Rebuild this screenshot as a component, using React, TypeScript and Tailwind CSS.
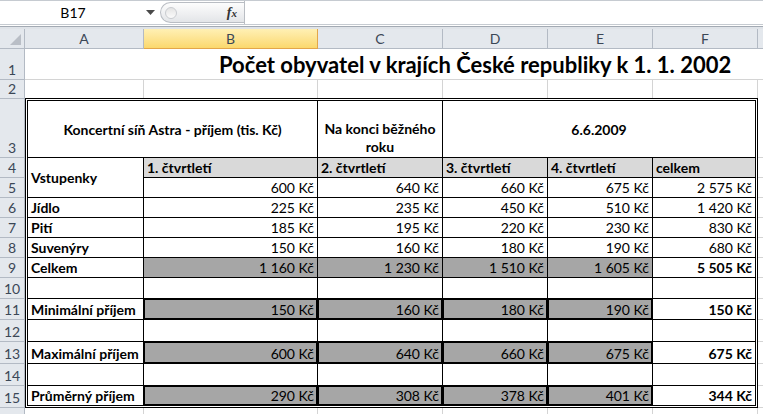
import React from 'react';

const nb = (s: string) => s.replace(/ /g, '\u00a0');

// sheet geometry (px)
const colWidths = [119, 174, 125, 105, 105, 105];
const colNames = ['A', 'B', 'C', 'D', 'E', 'F'];
const rowHeads = [
  { n: '1', h: 'h-[31px]' },
  { n: '2', h: 'h-[19px]' },
  { n: '3', h: 'h-[59px]' },
  { n: '4', h: 'h-[20px]' },
  { n: '5', h: 'h-[20px]' },
  { n: '6', h: 'h-[20px]' },
  { n: '7', h: 'h-[20px]' },
  { n: '8', h: 'h-[20px]' },
  { n: '9', h: 'h-[20px]' },
  { n: '10', h: 'h-[21px]' },
  { n: '11', h: 'h-[21px]' },
  { n: '12', h: 'h-[22px]' },
  { n: '13', h: 'h-[22px]' },
  { n: '14', h: 'h-[22px]' },
  { n: '15', h: 'h-[22px]' },
];
const gStrip = ['h-[60px]', 'h-[20px]', 'h-[20px]', 'h-[20px]', 'h-[20px]', 'h-[20px]', 'h-[20px]', 'h-[21px]', 'h-[21px]', 'h-[22px]', 'h-[22px]', 'h-[22px]', 'h-[22px]'];

type Kind = 'plain' | 'sum' | 'box' | 'blank';
const rows: { label: string; vals: string[]; total: string; kind: Kind }[] = [
  { label: 'Jídlo', vals: ['225', '235', '450', '510'], total: '1 420', kind: 'plain' },
  { label: 'Pití', vals: ['185', '195', '220', '230'], total: '830', kind: 'plain' },
  { label: 'Suvenýry', vals: ['150', '160', '180', '190'], total: '680', kind: 'plain' },
  { label: 'Celkem', vals: ['1 160', '1 230', '1 510', '1 605'], total: '5 505', kind: 'sum' },
  { label: '', vals: ['', '', '', ''], total: '', kind: 'blank' },
  { label: 'Minimální příjem', vals: ['150', '160', '180', '190'], total: '150', kind: 'box' },
  { label: '', vals: ['', '', '', ''], total: '', kind: 'blank' },
  { label: 'Maximální příjem', vals: ['600', '640', '660', '675'], total: '675', kind: 'box' },
  { label: '', vals: ['', '', '', ''], total: '', kind: 'blank' },
  { label: 'Průměrný příjem', vals: ['290', '308', '378', '401'], total: '344', kind: 'box' },
];

const cell = (extra: string, lastCol = false, lastRow = false) =>
  `flex overflow-hidden whitespace-nowrap px-[3px] border-black ${lastCol ? '' : 'border-r'} ${lastRow ? '' : 'border-b'} ${extra}`;

const kc = (v: string) => (v ? nb(`${v} Kč`) : '');

const FormulaBar = () => (
  <div>
    <div className="flex h-[25px] border-y border-[#c6cbd1] bg-white">
      <div className="flex w-[160px] items-center">
        <span className="flex-1 text-center text-[14px] text-black">B17</span>
        <svg width="9" height="5" viewBox="0 0 9 5" className="mr-[5px]">
          <path d="M0 0h9L4.5 5z" fill="#4a4a4a" />
        </svg>
      </div>
      <div className="my-[1px] flex w-[84px] items-center justify-between rounded-l-full border border-r-0 border-[#b9bdc3] bg-gradient-to-b from-[#fdfdfd] to-[#e3e5e8] pl-[4px] pr-[7px]">
        <span className="h-[12px] w-[12px] rounded-full border border-[#c9ccd0] bg-gradient-to-b from-[#e4e4e4] to-[#fbfbfb]" />
        <span className="text-[14px] font-bold italic text-[#333] [font-family:'Liberation_Serif',serif]">
          f<span className="text-[11px]">x</span>
        </span>
      </div>
      <div className="flex-1 border-l border-[#b9bdc3]" />
    </div>
    <div className="h-[1px] bg-white" />
    <div className="h-[3px] border-t border-[#a3aab3] bg-[#dfe3e8]" />
  </div>
);

const ColumnHeaders = () => (
  <div className="flex h-[20px] text-[14px] text-[#3b4756]">
    <div className="flex w-[25px] items-end justify-end border-b border-r border-[#b3bac4] bg-[#e4e8ed] p-[3px]">
      <svg width="11" height="11" viewBox="0 0 11 11">
        <path d="M11 0V11H0z" fill="#b9bec6" />
      </svg>
    </div>
    {colNames.map((c, i) => (
      <div
        key={c}
        style={{ width: colWidths[i] }}
        className={
          c === 'B'
            ? 'flex items-center justify-center border-b border-r border-[#e3a64a] bg-gradient-to-b from-[#fff0b4] to-[#fbd86c]'
            : 'flex items-center justify-center border-b border-r border-[#b3bac4] bg-[#e4e8ed]'
        }
      >
        {c}
      </div>
    ))}
    <div className="flex-1 border-b border-[#b3bac4] bg-[#e4e8ed]" />
  </div>
);

const RowHeaders = () => (
  <div className="flex w-[25px] flex-col text-[14px] text-[#3b4756]">
    {rowHeads.map((r) => (
      <div key={r.n} className={`flex ${r.h} items-end justify-center border-b border-r border-[#b3bac4] bg-[#e4e8ed] pb-[1px] leading-[17px]`}>
        {r.n}
      </div>
    ))}
    <div className="flex-1 border-r border-[#b3bac4] bg-[#e4e8ed]" />
  </div>
);

const GridRow = ({ h }: { h: string }) => (
  <div className={`flex ${h}`}>
    {colWidths.map((w, i) => (
      <div key={i} style={{ width: w }} className="border-r border-[#d4d4d4]" />
    ))}
    <div className="flex-1" />
  </div>
);

const Table = () => (
  <div className="grid w-[733px] grid-cols-[116px_174px_125px_105px_105px_102px] grid-rows-[57px_repeat(6,20px)_21px_21px_22px_22px_22px_19px] border-[3px] border-double border-black font-normal leading-[17px]">
    {/* row 3 */}
    <div className={cell('col-span-2 items-center justify-center font-bold')}>
      {nb('Koncertní síň Astra - příjem (tis. Kč)')}
    </div>
    <div className={cell('items-end justify-center pb-[1px] text-center font-bold leading-[18px] whitespace-normal')}>
      <span>
        {nb('Na konci běžného')}
        <br />
        roku
      </span>
    </div>
    <div className={cell('col-span-3 items-center justify-center font-bold', true)}>6.6.2009</div>

    {/* rows 4-5 */}
    <div className={cell('row-span-2 items-center font-bold')}>Vstupenky</div>
    {['1. čtvrtletí', '2. čtvrtletí', '3. čtvrtletí', '4. čtvrtletí', 'celkem'].map((t, i) => (
      <div key={t} className={cell('items-end bg-[#d9d9d9] pb-[1px] font-bold', i === 4)}>
        {nb(t)}
      </div>
    ))}
    {['600', '640', '660', '675', '2 575'].map((v, i) => (
      <div key={i} className={cell('items-end justify-end pb-[1px]', i === 4)}>
        {kc(v)}
      </div>
    ))}

    {/* rows 6-15 */}
    {rows.map((r, ri) => {
      const last = ri === rows.length - 1;
      const fill =
        r.kind === 'sum'
          ? 'bg-[#a6a6a6]'
          : r.kind === 'box'
            ? 'bg-[#a6a6a6] shadow-[inset_0_0_0_1px_#000]'
            : '';
      return (
        <React.Fragment key={ri}>
          <div className={cell('items-end pb-[1px] font-bold', false, last)}>{nb(r.label)}</div>
          {r.vals.map((v, i) => (
            <div key={i} className={cell(`items-end justify-end pb-[1px] ${fill}`, false, last)}>
              {kc(v)}
            </div>
          ))}
          <div className={cell(`items-end justify-end pb-[1px] ${r.kind === 'plain' ? '' : 'font-bold'}`, true, last)}>
            {kc(r.total)}
          </div>
        </React.Fragment>
      );
    })}
  </div>
);

const Sheet = () => (
  <div className="flex flex-1 flex-col overflow-hidden">
    <div className="flex h-[31px] items-end border-b border-[#d4d4d4] pl-[194px]">
      <span className="whitespace-nowrap text-[22px] font-bold leading-[28px]">
        {nb('Počet obyvatel v krajích České republiky k 1. 1. 2002')}
      </span>
    </div>
    <GridRow h="h-[18px]" />
    <div className="flex">
      <Table />
      <div className="flex flex-1 flex-col">
        {gStrip.map((h, i) => (
          <div key={i} className={`${h} border-b border-[#d4d4d4]`} />
        ))}
      </div>
    </div>
    <GridRow h="flex-1" />
  </div>
);

export default function App() {
  return (
    <div className="flex h-[414px] w-[763px] flex-col overflow-hidden bg-white text-[14px] text-black [font-family:Lato,'Liberation_Sans',sans-serif]">
      <FormulaBar />
      <ColumnHeaders />
      <div className="flex flex-1">
        <RowHeaders />
        <Sheet />
      </div>
    </div>
  );
}
